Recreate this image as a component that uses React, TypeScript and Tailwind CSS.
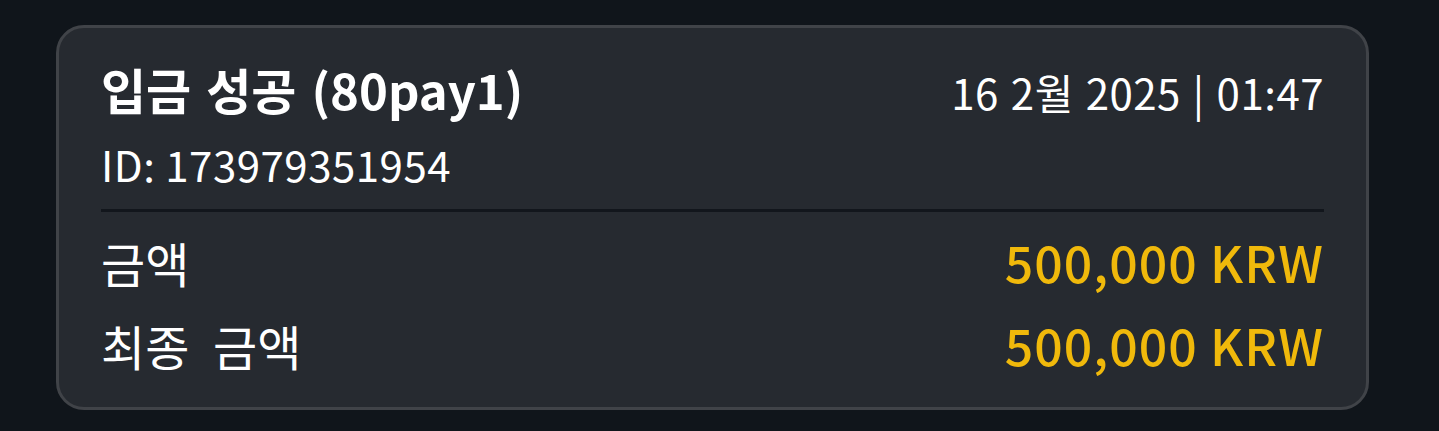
export default function App() {
  const font = { fontFamily: '"Noto Sans CJK KR", "Noto Sans", sans-serif' };
  return (
    <div className="w-[1439px] h-[431px] bg-[#10151b] pt-[25px] pl-[56px]" style={font}>
      <div className="w-[1313px] h-[385px] rounded-[28px] border-[3px] border-[#404348] bg-[#262a30] px-[42px] pt-[31px]">
        <div className="flex items-baseline justify-between">
          <h2 className="text-[49px] leading-[60px] font-bold text-white [word-spacing:4px]">입금 성공 (80pay1)</h2>
          <span className="text-[42px] leading-[50px] text-white tracking-[0.5px] [word-spacing:2px]">16 2월 2025 | 01:47</span>
        </div>
        <div className="mt-[20px] text-[42px] leading-[50px] text-white tracking-[0.5px]">ID: 173979351954</div>
        <div className="mt-[20px] h-[3px] bg-[#12161c]" />
        <div className="mt-[14px] flex flex-col gap-[13px]">
          <div className="flex items-baseline justify-between h-[70px]">
            <span className="text-[48px] leading-[70px] text-white">금액</span>
            <span className="text-[50px] leading-[70px] font-medium text-[#f0b90b] tracking-[1px]">500,000 KRW</span>
          </div>
          <div className="flex items-baseline justify-between h-[70px]">
            <span className="text-[48px] leading-[70px] text-white [word-spacing:13px]">최종 금액</span>
            <span className="text-[50px] leading-[70px] font-medium text-[#f0b90b] tracking-[1px]">500,000 KRW</span>
          </div>
        </div>
      </div>
    </div>
  );
}
